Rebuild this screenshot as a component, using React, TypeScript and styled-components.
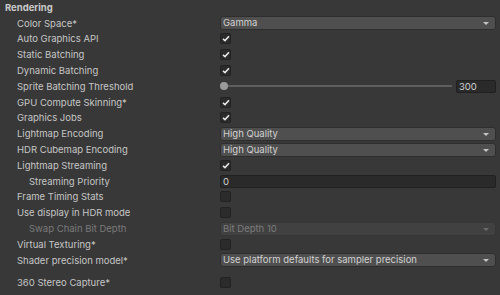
import React from 'react'
import styled, { createGlobalStyle } from 'styled-components'

const GlobalStyle = createGlobalStyle`
  html, body {
    margin: 0;
    padding: 0;
    background: #383838;
  }
  body {
    font-family: Inter, 'Liberation Sans', sans-serif;
    font-size: 9.5px;
    color: #c6c6c6;
  }
`

const ROW = 15.8

const Panel = styled.div`
  width: 500px;
  height: 295px;
  padding: 0 4px 0 5px;
  box-sizing: border-box;
  overflow: hidden;
`

const Header = styled.div`
  height: 15.3px;
  line-height: 15.3px;
  font-weight: 700;
  color: #cacaca;
`

const Row = styled.div<{ $gap?: number }>`
  display: grid;
  grid-template-columns: 203px 1fr;
  align-items: center;
  height: ${ROW}px;
  padding-left: 12px;
  margin-top: ${(p) => p.$gap || 0}px;
`

const Label = styled.div<{ $indent?: boolean; $disabled?: boolean }>`
  padding-left: ${(p) => (p.$indent ? 12 : 0)}px;
  color: ${(p) => (p.$disabled ? '#7a7a7a' : '#c6c6c6')};
  white-space: nowrap;
`

const Dropdown = styled.div<{ $disabled?: boolean }>`
  position: relative;
  height: 14px;
  line-height: 12px;
  box-sizing: border-box;
  border: 1px solid ${(p) => (p.$disabled ? '#363636' : '#2e2e2e')};
  border-radius: 3px;
  background: ${(p) => (p.$disabled ? '#414141' : '#4f4f4f')};
  color: ${(p) => (p.$disabled ? '#7c7c7c' : '#d2d2d2')};
  padding-left: 2px;
  white-space: nowrap;
`

const Arrow = styled.span<{ $disabled?: boolean }>`
  position: absolute;
  right: 6px;
  top: 5px;
  width: 0;
  height: 0;
  border-left: 3px solid transparent;
  border-right: 3px solid transparent;
  border-top: 3px solid ${(p) => (p.$disabled ? '#6c6c6c' : '#c4c4c4')};
`

const Box = styled.div`
  width: 11px;
  height: 11px;
  box-sizing: border-box;
  border: 1px solid #222;
  border-radius: 2px;
  background: #2b2b2b;
  display: flex;
  align-items: center;
  justify-content: center;
`

const Field = styled.div<{ $width?: number }>`
  height: 13px;
  line-height: 11px;
  box-sizing: border-box;
  width: ${(p) => (p.$width ? `${p.$width}px` : '100%')};
  border: 1px solid #202020;
  border-radius: 2px;
  background: #2a2a2a;
  color: #d2d2d2;
  padding-left: 2px;
`

const SliderWrap = styled.div`
  display: flex;
  align-items: center;
  gap: 4px;
`

const Track = styled.div`
  position: relative;
  flex: 1;
  height: 2px;
  margin-left: 4px;
  background: #5e5e5e;
`

const Thumb = styled.span`
  position: absolute;
  left: -4px;
  top: -3px;
  width: 8px;
  height: 8px;
  border-radius: 50%;
  background: #9a9a9a;
`

const Check: React.FC<{ on?: boolean }> = ({ on }) => (
  <Box>
    {on && (
      <svg width="8" height="7" viewBox="0 0 8 7">
        <path d="M1 3.8 L3 5.6 L7 1.2" stroke="#e6e6e6" strokeWidth="1.6" fill="none" />
      </svg>
    )}
  </Box>
)

const Select: React.FC<{ value: string; disabled?: boolean }> = ({ value, disabled }) => (
  <Dropdown $disabled={disabled}>
    {value}
    <Arrow $disabled={disabled} />
  </Dropdown>
)

export default function App() {
  return (
    <>
      <GlobalStyle />
      <Panel>
        <Header>Rendering</Header>
        <Row>
          <Label>Color Space*</Label>
          <Select value="Gamma" />
        </Row>
        <Row>
          <Label>Auto Graphics API</Label>
          <Check on />
        </Row>
        <Row>
          <Label>Static Batching</Label>
          <Check on />
        </Row>
        <Row>
          <Label>Dynamic Batching</Label>
          <Check on />
        </Row>
        <Row>
          <Label>Sprite Batching Threshold</Label>
          <SliderWrap>
            <Track>
              <Thumb />
            </Track>
            <Field $width={40}>300</Field>
          </SliderWrap>
        </Row>
        <Row>
          <Label>GPU Compute Skinning*</Label>
          <Check on />
        </Row>
        <Row>
          <Label>Graphics Jobs</Label>
          <Check on />
        </Row>
        <Row>
          <Label>Lightmap Encoding</Label>
          <Select value="High Quality" />
        </Row>
        <Row>
          <Label>HDR Cubemap Encoding</Label>
          <Select value="High Quality" />
        </Row>
        <Row>
          <Label>Lightmap Streaming</Label>
          <Check on />
        </Row>
        <Row>
          <Label $indent>Streaming Priority</Label>
          <Field>0</Field>
        </Row>
        <Row>
          <Label>Frame Timing Stats</Label>
          <Check />
        </Row>
        <Row>
          <Label>Use display in HDR mode</Label>
          <Check />
        </Row>
        <Row>
          <Label $indent $disabled>Swap Chain Bit Depth</Label>
          <Select value="Bit Depth 10" disabled />
        </Row>
        <Row>
          <Label>Virtual Texturing*</Label>
          <Check />
        </Row>
        <Row>
          <Label>Shader precision model*</Label>
          <Select value="Use platform defaults for sampler precision" />
        </Row>
        <Row $gap={6.5}>
          <Label>360 Stereo Capture*</Label>
          <Check />
        </Row>
      </Panel>
    </>
  )
}
